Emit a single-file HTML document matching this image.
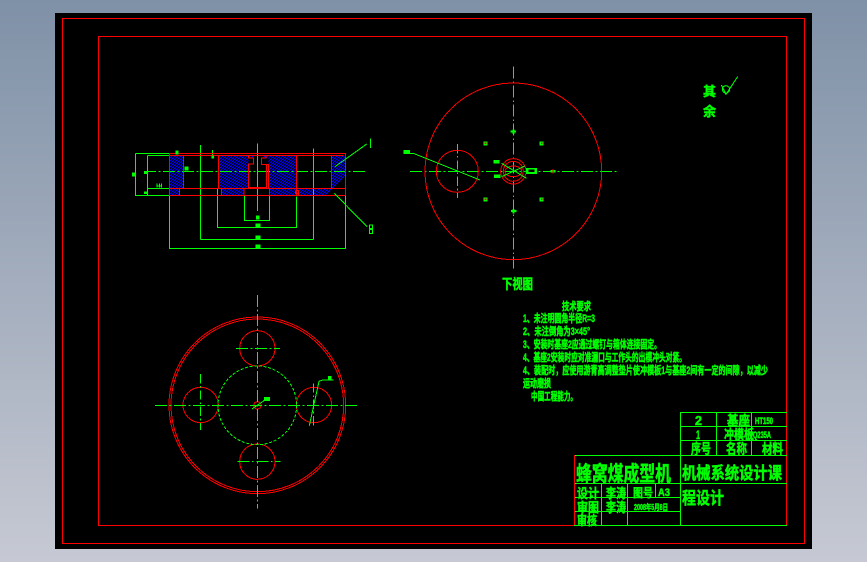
<!DOCTYPE html>
<html lang="zh"><head><meta charset="utf-8"><title>蜂窝煤成型机</title>
<style>
html,body{margin:0;padding:0;width:867px;height:562px;overflow:hidden;background:linear-gradient(180deg,#7f91a7 0%,#a3adbd 50%,#c6c9d3 100%)}
#f{position:absolute;left:55px;top:13px;width:757px;height:536px;background:#000}
svg{position:absolute;left:0;top:0}
.g{stroke:#0f0;fill:none;stroke-width:3}
.r{stroke:#f00;fill:none;stroke-width:3}
.c{stroke-dasharray:36 8 5 8}
text{font-family:"Liberation Sans","Noto Sans CJK SC",sans-serif;fill:#0f0;stroke:#0f0;stroke-width:.5;font-weight:bold;shape-rendering:auto}
</style></head><body><div id="f"></div>
<svg width="867" height="562" viewBox="0 0 867 562" shape-rendering="crispEdges">
<defs><clipPath id="hc">
<rect x="169.500" y="156" width="14" height="32.500"/><rect x="218.500" y="156" width="30" height="32.500"/><rect x="268.500" y="156" width="28" height="32.500"/><rect x="331.500" y="156" width="14" height="32.500"/>
<rect x="169.500" y="189" width="10" height="6.500"/><rect x="221.500" y="189" width="22" height="6.500"/><rect x="269.500" y="189" width="76" height="6.500"/>
<rect x="248" y="156" width="6" height="2"/><rect x="263" y="156" width="6" height="2"/>
</clipPath></defs>
<rect x="62.500" y="18.500" width="742" height="525" fill="none" stroke="#f00"/>
<rect x="98.500" y="36.500" width="688" height="489" fill="none" stroke="#f00"/>

<!-- hatch -->
<path clip-path="url(#hc)" stroke="#00f" stroke-width="1" fill="none" d="M126 196L169 153M129 196L172 153M132 196L175 153M135 196L178 153M138 196L181 153M141 196L184 153M144 196L187 153M147 196L190 153M150 196L193 153M153 196L196 153M156 196L199 153M159 196L202 153M162 196L205 153M165 196L208 153M168 196L211 153M171 196L214 153M174 196L217 153M177 196L220 153M180 196L223 153M183 196L226 153M186 196L229 153M189 196L232 153M192 196L235 153M195 196L238 153M198 196L241 153M201 196L244 153M204 196L247 153M207 196L250 153M210 196L253 153M213 196L256 153M216 196L259 153M219 196L262 153M222 196L265 153M225 196L268 153M228 196L271 153M231 196L274 153M234 196L277 153M237 196L280 153M240 196L283 153M243 196L286 153M246 196L289 153M249 196L292 153M252 196L295 153M255 196L298 153M258 196L301 153M261 196L304 153M264 196L307 153M267 196L310 153M270 196L313 153M273 196L316 153M276 196L319 153M279 196L322 153M282 196L325 153M285 196L328 153M288 196L331 153M291 196L334 153M294 196L337 153M297 196L340 153M300 196L343 153M303 196L346 153M306 196L349 153M309 196L352 153M312 196L355 153M315 196L358 153M318 196L361 153M321 196L364 153M324 196L367 153"/>

<!-- section view -->
<g transform="translate(120 130) scale(.33333)">
<path class="g c" d="M72 124H735"/>
<path class="g" d="M412 40V243M241 45V329M580 55V329M46 70H148M82 76H280M46 70V196H148M82 76V196M82 176H148M148 196V356H676V196M241 328H580M292 176V293H529V200M373 196V271H449V196M292 293H529M278 60V85"/>
<path class="r" d="M148 70H676V196H148ZM148 77H670M148 176H676M190 77V176M296 77V176M529 77V196M634 77V176M178 176V196M304 176V196M372 176V196M448 176V196M386 77V84H401V102H386V172H440V104H425V84H438V77M438 104H446V176"/>
<path class="r" d="M526 182H536V196M526 182V190H536"/>
<path class="g" d="M645 110L740 42M643 190L741 290"/>
<path class="g" d="M751 25V54" stroke-width="6"/>
<g fill="#0f0"><rect x="36" y="128" width="10" height="12"/><rect x="72" y="124" width="10" height="8"/><rect x="72" y="184" width="10" height="8"/><rect x="166" y="61" width="10" height="12"/><rect x="274" y="76" width="8" height="10"/><rect x="194" y="109" width="12" height="12"/><rect x="408" y="256" width="11" height="12"/><rect x="406" y="280" width="16" height="11"/><rect x="406" y="316" width="16" height="11"/><rect x="406" y="343" width="16" height="11"/></g>
<path class="g" d="M111 172V160M118 172V160M124 172V160M111 168H124"/>
<path class="g" d="M749 285H757V296H749ZM749 310H757V298H749Z"/>
</g>

<!-- top view -->
<g transform="translate(400 60) scale(.33333)">
<path class="g c" d="M30 334H652M340 20V630"/>
<path class="g" stroke-dasharray="28 8 5 8" d="M172 252V414"/>
<circle class="r" cx="340" cy="334" r="265"/>
<circle class="r" cx="172" cy="334" r="63"/>
<circle class="r" cx="340" cy="334" r="38"/><circle class="r" cx="340" cy="334" r="30"/>
<ellipse class="r" cx="340" cy="334" rx="25" ry="16"/>
<path class="g" d="M40 280L240 360M30 280H42M305 310L380 355M305 350L375 318"/>
<g fill="#0f0"><rect x="10" y="270" width="20" height="12"/><rect x="280" y="300" width="18" height="11"/><rect x="282" y="343" width="20" height="11"/><rect x="378" y="324" width="33" height="18"/></g>
<rect x="386" y="329" width="18" height="7" fill="#000"/>
<g fill="#0f0"><rect x="332" y="212" width="16" height="6"/><rect x="337" y="208" width="6" height="14"/><rect x="333" y="450" width="16" height="6"/><rect x="337" y="447" width="6" height="14"/>
<rect x="452" y="330" width="14" height="8"/><rect x="251" y="244" width="12" height="12"/><rect x="419" y="244" width="12" height="12"/><rect x="251" y="412" width="12" height="12"/><rect x="419" y="412" width="12" height="12"/></g>
<g fill="#f00"><rect x="254" y="247" width="5" height="5"/><rect x="423" y="247" width="5" height="5"/><rect x="254" y="415" width="5" height="5"/><rect x="423" y="415" width="5" height="5"/><rect x="457" y="327" width="3" height="14"/></g>
</g>
<text x="502" y="289" font-size="14" textLength="31" lengthAdjust="spacingAndGlyphs">下视图</text>

<!-- bottom view -->
<g transform="translate(150 290) scale(.33333)">
<circle class="r" cx="322" cy="346" r="265"/><circle class="r" cx="322" cy="346" r="259"/>
<circle class="r" cx="322" cy="175" r="53"/><circle class="r" cx="322" cy="515" r="53"/><circle class="r" cx="152" cy="345" r="53"/><circle class="r" cx="492" cy="345" r="53"/><circle class="r" cx="322" cy="346" r="11"/>
<path class="g c" d="M15 346H625M322 15V656M258 175H390M262 515H392"/>
<path class="g" stroke-dasharray="28 8 5 8" d="M152 252V420M490 280V410"/>
<circle class="g" cx="322" cy="346" r="118" stroke-dasharray="9 5"/>
<path class="g" d="M306 357L345 330M478 407L507 274L518 270H550"/>
<rect x="342" y="321" width="18" height="12" fill="#0f0"/><rect x="534" y="258" width="10" height="12" fill="#0f0"/>
</g>

<!-- surface mark -->
<text x="703" y="96" font-size="13">其</text><text x="703" y="116" font-size="13">余</text>
<g transform="translate(690 65) scale(.33333)"><path class="g" d="M94 60L108 88L143 35"/><circle class="g" cx="108" cy="73" r="11"/></g>

<!-- tech notes -->
<g font-size="11">
<text x="562" y="310" textLength="29" lengthAdjust="spacingAndGlyphs">技术要求</text>
<text x="523" y="322" textLength="72" lengthAdjust="spacingAndGlyphs">1、未注明圆角半径R=3</text>
<text x="523" y="335" textLength="67" lengthAdjust="spacingAndGlyphs">2、未注倒角为3×45°</text>
<text x="523" y="348" textLength="138" lengthAdjust="spacingAndGlyphs">3、安装时基座2应通过螺钉与箱体连接固定。</text>
<text x="523" y="361" textLength="163" lengthAdjust="spacingAndGlyphs">4、基座2安装时应对准漏口与工作头的出模冲头对紧。</text>
<text x="523" y="374" textLength="245" lengthAdjust="spacingAndGlyphs">4、装配时，应使用游青高调整垫片使冲模板1与基座2间有一定的间隙，以减少</text>
<text x="523" y="387" textLength="28" lengthAdjust="spacingAndGlyphs">运动磨损</text>
<text x="531" y="400" textLength="46" lengthAdjust="spacingAndGlyphs">中国工程能力。</text>
</g>

<!-- title block -->
<g stroke="#0f0" fill="none">
<path d="M681 412.500H787M681 426.500H787M681 440.500H787M574 455.500H787M574 483.500H787M574 497.500H681M574 511.500H681M574 525.500H787M680.500 412V525M716.500 412V455M751.500 412V455M601.500 483V525M627.500 483V525M655.500 483V497"/>
</g>
<path d="M574.500 455V525" stroke="#f00"/>
<g>
<text x="695" y="425" font-size="13" textLength="7" lengthAdjust="spacingAndGlyphs">2</text>
<text x="727" y="425" font-size="13" textLength="23" lengthAdjust="spacingAndGlyphs">基座</text>
<text x="755" y="424" font-size="9" textLength="18" lengthAdjust="spacingAndGlyphs">HT150</text>
<text x="696" y="439" font-size="12" textLength="4" lengthAdjust="spacingAndGlyphs">1</text>
<text x="724" y="439" font-size="13" textLength="30" lengthAdjust="spacingAndGlyphs">冲模板</text>
<text x="753" y="438" font-size="9" textLength="18" lengthAdjust="spacingAndGlyphs">Q235A</text>
<text x="691" y="454" font-size="14" textLength="20" lengthAdjust="spacingAndGlyphs">序号</text>
<text x="726" y="454" font-size="14" textLength="21" lengthAdjust="spacingAndGlyphs">名称</text>
<text x="762" y="454" font-size="14" textLength="21" lengthAdjust="spacingAndGlyphs">材料</text>
<text x="576" y="481" font-size="21" textLength="95" lengthAdjust="spacingAndGlyphs">蜂窝煤成型机</text>
<text x="682" y="479" font-size="17" textLength="100" lengthAdjust="spacingAndGlyphs">机械系统设计课</text>
<text x="682" y="504" font-size="17" textLength="42" lengthAdjust="spacingAndGlyphs">程设计</text>
<text x="577" y="498" font-size="13" textLength="22" lengthAdjust="spacingAndGlyphs">设计</text>
<text x="606" y="498" font-size="13" textLength="20" lengthAdjust="spacingAndGlyphs">李涛</text>
<text x="633" y="497" font-size="12" textLength="20" lengthAdjust="spacingAndGlyphs">图号</text>
<text x="658" y="496" font-size="11" textLength="12" lengthAdjust="spacingAndGlyphs">A3</text>
<text x="577" y="512" font-size="13" textLength="22" lengthAdjust="spacingAndGlyphs">审图</text>
<text x="606" y="512" font-size="13" textLength="20" lengthAdjust="spacingAndGlyphs">李涛</text>
<text x="634" y="510" font-size="8" textLength="34" lengthAdjust="spacingAndGlyphs">2008年5月8日</text>
<text x="577" y="525" font-size="13" textLength="20" lengthAdjust="spacingAndGlyphs">审核</text>
</g>
</svg>
</body></html>
